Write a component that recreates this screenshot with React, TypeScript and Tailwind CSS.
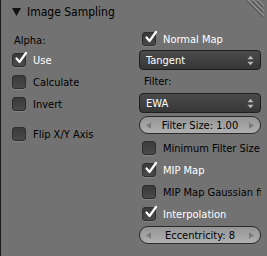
import React from 'react'

const font = { fontFamily: '"DejaVu Sans Condensed", "Liberation Sans", sans-serif' }

function Check({ checked, label, clip }: { checked?: boolean; label: string; clip?: boolean }) {
  return (
    <div className={`flex items-center h-[22px] gap-[7px] whitespace-nowrap ${clip ? 'overflow-hidden' : ''}`}>
      <div className="relative w-[14px] h-[14px] shrink-0 rounded-[3px] border border-[#2e2e2e] bg-gradient-to-b from-[#3a3a3a] to-[#4a4a4a] shadow-[0_1px_0_rgba(255,255,255,0.12)]">
        {checked && (
          <svg viewBox="0 0 14 14" className="absolute left-[1px] top-[-3px] w-[14px] h-[14px]">
            <path d="M2.5 7.5 L5.5 11 L12 2" fill="none" stroke="#ffffff" strokeWidth="2.2" strokeLinecap="round" strokeLinejoin="round" />
          </svg>
        )}
      </div>
      <span className={checked ? 'text-white' : 'text-black'}>{label}</span>
    </div>
  )
}

function Dropdown({ label }: { label: string }) {
  return (
    <div className="flex items-center justify-between h-[20px] px-[6px] rounded-[4px] border border-[#1e1e1e] bg-gradient-to-b from-[#4a4a4a] to-[#373737] text-white">
      <span>{label}</span>
      <svg viewBox="0 0 8 12" className="w-[7px] h-[11px]">
        <path d="M4 0.5 L7.5 4.5 H0.5 Z" fill="#b8b8b8" />
        <path d="M4 11.5 L7.5 7.5 H0.5 Z" fill="#b8b8b8" />
      </svg>
    </div>
  )
}

function Slider({ label }: { label: string }) {
  return (
    <div className="flex items-center justify-between h-[18px] px-[6px] rounded-full border border-[#2a2a2a] bg-gradient-to-b from-[#959595] to-[#b0b0b0] text-black">
      <svg viewBox="0 0 6 8" className="w-[5px] h-[7px]">
        <path d="M0 4 L6 0 V8 Z" fill="#7a7a7a" />
      </svg>
      <span>{label}</span>
      <svg viewBox="0 0 6 8" className="w-[5px] h-[7px]">
        <path d="M6 4 L0 0 V8 Z" fill="#7a7a7a" />
      </svg>
    </div>
  )
}

export default function App() {
  return (
    <div
      className="relative w-[267px] h-[256px] overflow-hidden bg-[#727272] border-l border-[#1a1a1a] text-[11px] leading-none"
      style={font}
    >
      {/* header */}
      <div className="flex items-center h-[26px] pb-[3px] pl-[11px] gap-[6px] text-[12px] text-black">
        <svg viewBox="0 0 9 8" className="w-[9px] h-[8px]">
          <path d="M0 0 H9 L4.5 8 Z" fill="#111111" />
        </svg>
        <span>Image Sampling</span>
      </div>

      {/* corner grip */}
      <svg viewBox="0 0 20 20" className="absolute right-[3px] top-0 w-[20px] h-[20px]">
        <path d="M4 0 L20 16 M9 0 L20 11 M14 0 L20 6" stroke="#9a9a9a" strokeWidth="1" />
        <path d="M3 1 L19 17 M8 1 L19 12 M13 1 L19 7" stroke="#4a4a4a" strokeWidth="1" />
      </svg>

      <div className="flex pl-[11px] pr-[6px]">
        {/* left column */}
        <div className="w-[127px] shrink-0 flex flex-col">
          <div className="h-[23px] pt-[5px] pl-[2px] flex items-center text-black">Alpha:</div>
          <Check checked label="Use" />
          <Check label="Calculate" />
          <Check label="Invert" />
          <div className="h-[8px]" />
          <Check label="Flip X/Y Axis" />
        </div>

        {/* right column */}
        <div className="flex-1 min-w-0 flex flex-col">
          <div className="mt-[2px] pl-[3px]">
            <Check checked label="Normal Map" />
          </div>
          <Dropdown label="Tangent" />
          <div className="h-[23px] flex items-center text-black pl-[5px]">Filter:</div>
          <Dropdown label="EWA" />
          <div className="mt-[3px]">
            <Slider label="Filter Size: 1.00" />
          </div>
          <div className="mt-[3px] pl-[3px] flex flex-col">
            <Check label="Minimum Filter Size" />
            <Check checked label="MIP Map" />
            <Check clip label="MIP Map Gaussian filter" />
            <Check checked label="Interpolation" />
          </div>
          <div className="mt-[1px]">
            <Slider label="Eccentricity: 8" />
          </div>
        </div>
      </div>
    </div>
  )
}
